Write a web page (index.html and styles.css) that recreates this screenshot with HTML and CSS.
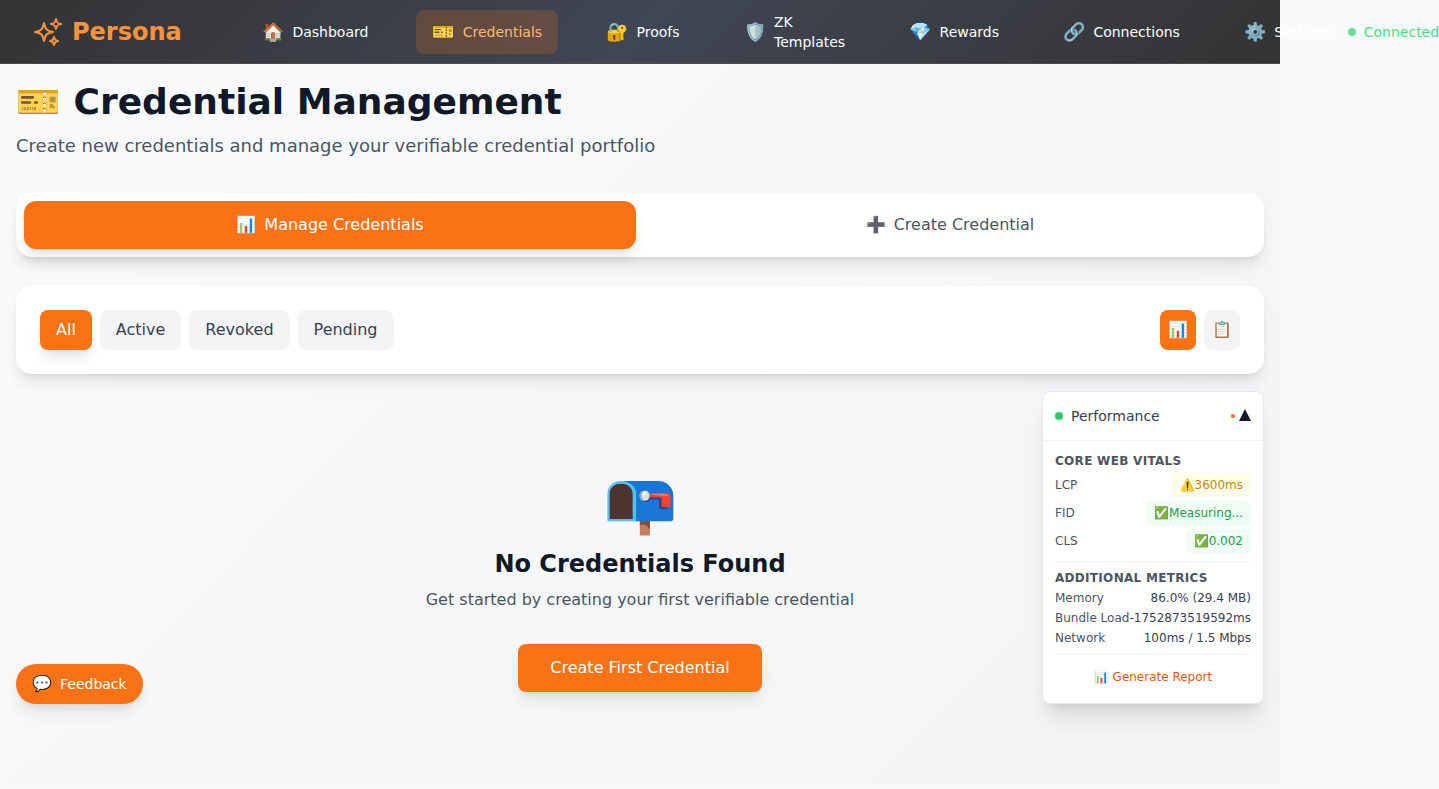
FILE: index.html
```html
<!DOCTYPE html>
<html lang="en">
<head>
<meta charset="utf-8">
<title>Persona</title>
<link rel="stylesheet" href="styles.css">
</head>
<body>
<div class="app">
  <header class="topbar">
    <div class="brand">
      <svg class="brand-icon" viewBox="0 0 24 24" fill="none" stroke="currentColor" stroke-width="1.5" stroke-linecap="round" stroke-linejoin="round"><path d="M9.813 15.904L9 18.75l-.813-2.846a4.5 4.5 0 00-3.09-3.09L2.25 12l2.846-.813a4.5 4.5 0 003.09-3.09L9 5.25l.813 2.846a4.5 4.5 0 003.09 3.09L15.75 12l-2.846.813a4.5 4.5 0 00-3.09 3.09zM18.259 8.715L18 9.75l-.259-1.035a3.375 3.375 0 00-2.455-2.456L14.25 6l1.036-.259a3.375 3.375 0 002.455-2.456L18 2.25l.259 1.035a3.375 3.375 0 002.456 2.456L21.75 6l-1.035.259a3.375 3.375 0 00-2.456 2.456zM16.894 20.567L16.5 21.75l-.394-1.183a2.25 2.25 0 00-1.423-1.423L13.5 18.75l1.183-.394a2.25 2.25 0 001.423-1.423l.394-1.183.394 1.183a2.25 2.25 0 001.423 1.423l1.183.394-1.183.394a2.25 2.25 0 00-1.423 1.423z"/></svg>
      <span>Persona</span>
    </div>
    <nav class="nav">
      <a class="nav-item"><span class="nav-icon">🏠</span><span>Dashboard</span></a>
      <a class="nav-item active"><span class="nav-icon">🎫</span><span>Credentials</span></a>
      <a class="nav-item"><span class="nav-icon">🔐</span><span>Proofs</span></a>
      <a class="nav-item"><span class="nav-icon">🛡️</span><span>ZK<br>Templates</span></a>
      <a class="nav-item"><span class="nav-icon">💎</span><span>Rewards</span></a>
      <a class="nav-item"><span class="nav-icon">🔗</span><span>Connections</span></a>
      <a class="nav-item"><span class="nav-icon">⚙️</span><span>Settings</span></a>
    </nav>
    <div class="status"><span class="status-dot"></span><span>Connected</span></div>
  </header>
  <main class="main">
    <h1 class="title">🎫 Credential Management</h1>
    <p class="subtitle">Create new credentials and manage your verifiable credential portfolio</p>
    <div class="card tabs">
      <button class="tab selected"><span>📊</span><span>Manage Credentials</span></button>
      <button class="tab"><span>➕</span><span>Create Credential</span></button>
    </div>
    <div class="card toolbar">
      <div class="group">
        <button class="chip raised">All</button>
        <button class="chip">Active</button>
        <button class="chip">Revoked</button>
        <button class="chip">Pending</button>
      </div>
      <div class="group">
        <button class="chip view on">📊</button>
        <button class="chip view">📋</button>
      </div>
    </div>
    <section class="empty">
      <div class="empty-icon">📭</div>
      <h3 class="empty-title">No Credentials Found</h3>
      <p class="empty-text">Get started by creating your first verifiable credential</p>
      <button class="cta">Create First Credential</button>
    </section>
  </main>
  <button class="feedback"><span class="feedback-icon">💬</span><span>Feedback</span></button>
  <aside class="perf">
    <div class="perf-head">
      <span class="perf-dot"></span><span class="perf-name">Performance</span>
      <span class="perf-alert"></span><svg class="perf-arrow" viewBox="0 0 12 12"><path d="M6 0l6 12H0z"/></svg>
    </div>
    <div class="perf-body">
      <h4 class="perf-title">CORE WEB VITALS</h4>
      <div class="vital"><span>LCP</span><span class="badge warn"><span>⚠️</span><span>3600ms</span></span></div>
      <div class="vital"><span>FID</span><span class="badge good"><span>✅</span><span>Measuring...</span></span></div>
      <div class="vital"><span>CLS</span><span class="badge good"><span>✅</span><span>0.002</span></span></div>
      <div class="metrics">
        <h4 class="perf-title">ADDITIONAL METRICS</h4>
        <div class="metric"><span>Memory</span><span class="value">86.0% (29.4 MB)</span></div>
        <div class="metric"><span>Bundle Load</span><span class="value">-1752873519592ms</span></div>
        <div class="metric"><span>Network</span><span class="value">100ms / 1.5 Mbps</span></div>
      </div>
      <div class="report"><span>📊 Generate Report</span></div>
    </div>
  </aside>
</div>
</body>
</html>
```
FILE: styles.css
```css
* { box-sizing: border-box; margin: 0; padding: 0; }
html { background: #f9fafc; overflow: hidden; }
body { font-family: "DejaVu Sans", sans-serif; font-size: 16px; line-height: 24px; color: #111827; }
button { font: inherit; border: 0; background: none; color: inherit; }
.app { position: relative; width: 1280px; height: 784px; background: linear-gradient(135deg, #f9fafc, #f3f4f6); }

.topbar { display: flex; align-items: center; height: 64px; padding: 0 32px; background: linear-gradient(135deg, #333333, #404654 50%, #333333); border-bottom: 1px solid #4b4b4d; white-space: nowrap; }
.brand { display: flex; align-items: center; gap: 8px; flex: none; width: 150px; margin-right: 64px; font-size: 24px; line-height: 32px; font-weight: 700; color: #fb923c; }
.brand-icon { width: 32px; height: 32px; flex: none; }
.nav { display: flex; align-items: center; gap: 32px; flex: none; }
.nav-item { display: flex; align-items: center; gap: 8px; min-height: 44px; padding: 0 16px; border-radius: 8px; font-size: 14px; line-height: 20px; color: #fff; }
.nav-item.active { color: #fdba74; background: rgba(249, 115, 22, .2); }
.nav-icon { min-width: 22.42px; font-size: 18px; line-height: 28px; }
.status { display: flex; align-items: center; gap: 8px; flex: none; font-size: 14px; line-height: 20px; color: #4ade80; }
.status-dot { width: 8px; height: 8px; border-radius: 50%; background: #6ae298; }

.main { padding: 16px 16px 0; }
.title { height: 44px; font-size: 36px; line-height: 44px; font-weight: 700; }
.subtitle { margin: 8px 0 33px; font-size: 18px; line-height: 28px; color: #4b5563; }
.card { background: #fff; border-radius: 16px; box-shadow: 0 10px 15px -3px rgba(0, 0, 0, .1), 0 4px 6px -4px rgba(0, 0, 0, .1); }
.tabs { display: flex; gap: 8px; padding: 8px; margin-bottom: 29px; }
.tab { flex: 1; display: flex; align-items: center; justify-content: center; gap: 8px; height: 48px; border-radius: 12px; color: #4b5563; }
.tab.selected, .chip.raised, .cta, .feedback { background: #f97316; color: #fff; box-shadow: 0 10px 15px -3px rgba(0, 0, 0, .1), 0 4px 6px -4px rgba(0, 0, 0, .1); }
.toolbar { display: flex; justify-content: space-between; padding: 24px; }
.group { display: flex; gap: 8px; }
.chip { height: 40px; padding: 0 16px; border-radius: 8px; background: #f3f4f6; color: #374151; }
.chip.view { width: 36px; padding: 0; text-align: center; }
.chip.view.on { background: #f97316; }
.empty { display: flex; flex-direction: column; align-items: center; padding-top: 98px; }
.empty-icon { font-size: 60px; line-height: 60px; }
.empty-title { margin-top: 16px; font-size: 24px; line-height: 32px; font-weight: 700; }
.empty-text { margin: 8px 0 32px; color: #4b5563; }
.cta { height: 48px; padding: 0 32px; border-radius: 8px; }

.feedback { position: absolute; left: 16px; top: 664px; display: flex; align-items: center; gap: 8px; height: 40px; padding: 0 16px; border-radius: 20px; font-size: 14px; line-height: 20px; }
.feedback-icon { font-size: 16px; }
.perf { position: absolute; left: 1042px; top: 391px; width: 222px; height: 313px; background: #fff; border: 1px solid #e5e7eb; border-radius: 8px; box-shadow: 0 20px 25px -5px rgba(0, 0, 0, .1), 0 8px 10px -6px rgba(0, 0, 0, .1); font-size: 12px; line-height: 16px; color: #4b5563; }
.perf-head { display: flex; align-items: center; height: 49px; padding: 0 12px; border-bottom: 1px solid #f3f4f6; font-size: 14px; color: #374151; }
.perf-dot { width: 8px; height: 8px; margin-right: 8px; border-radius: 50%; background: #2fc866; }
.perf-name { flex: 1; }
.perf-alert { width: 4px; height: 4px; margin-right: 4px; border-radius: 50%; background: #f97316; }
.perf-arrow { width: 12px; height: 12px; margin-bottom: 2px; fill: #111827; }
.perf-body { padding: 12px; }
.perf-title { font-size: 12px; line-height: 16px; font-weight: 700; letter-spacing: .3px; }
.vital { display: flex; justify-content: space-between; align-items: center; height: 24px; margin-top: 4px; }
.badge { display: flex; padding: 4px 8px; border-radius: 4px; }
.warn { color: #ca8a04; background: #fefce8; }
.good { color: #16a34a; background: #f0fdf4; }
.metrics { margin-top: 8px; padding-top: 8px; border-top: 1px solid #f3f4f6; }
.metric { display: flex; justify-content: space-between; margin-top: 4px; white-space: nowrap; }
.value { color: #374151; }
.report { margin-top: 8px; padding-top: 14px; border-top: 1px solid #f3f4f6; text-align: center; color: #ea580c; }
```
